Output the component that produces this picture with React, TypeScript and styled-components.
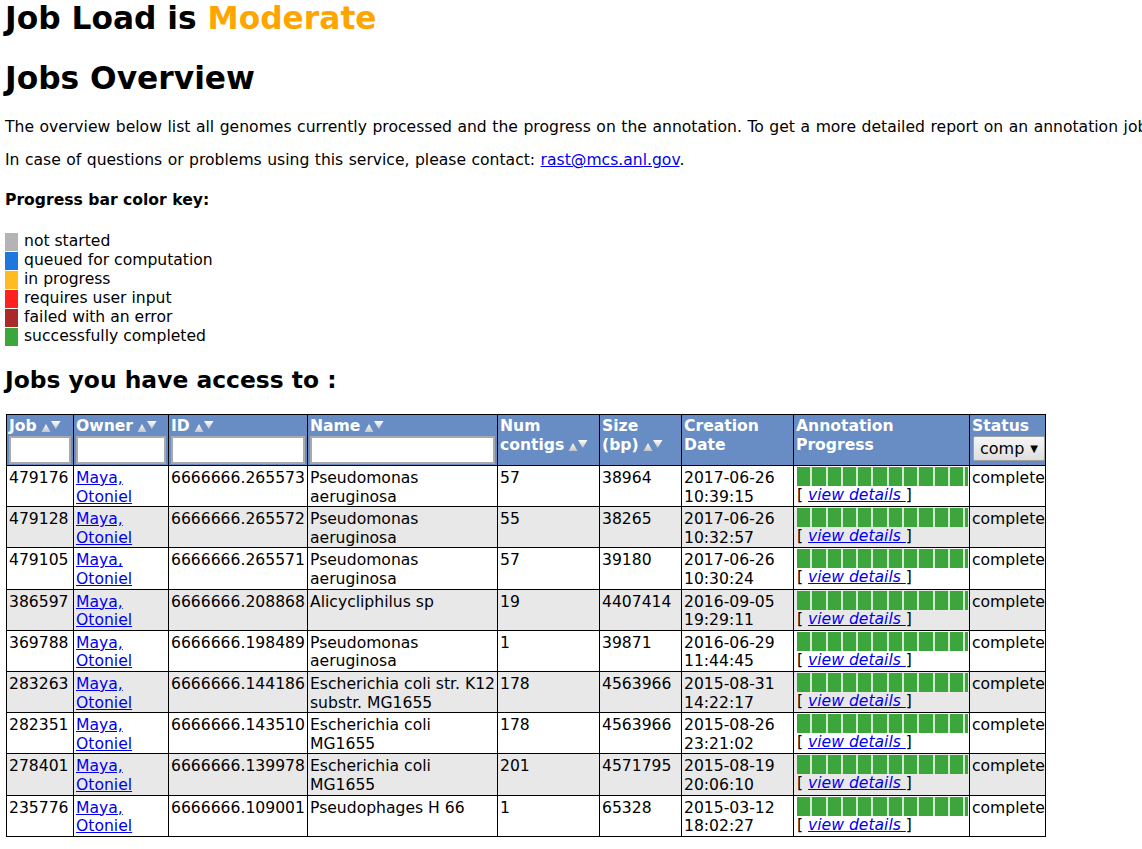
import React from "react";
import styled, { createGlobalStyle } from "styled-components";

const Global = createGlobalStyle`
  html, body { margin: 0; padding: 0; background: #fff; }
  body { font-family: "DejaVu Sans", Verdana, sans-serif; color: #000; font-size: 15.6px; }
`;

const Page = styled.div`
  padding: 0 5px 10px 5px;
  overflow: hidden;
`;

const Title = styled.h1<{ $mb?: number }>`
  font-size: 31.3px;
  font-weight: bold;
  margin: 0 0 ${(p) => p.$mb ?? 23}px 0;
  line-height: 37px;
`;

const Orange = styled.span`
  color: #ffa500;
`;

const Para = styled.p<{ $ws: number }>`
  margin: 0 0 15px 0;
  line-height: 18px;
  white-space: nowrap;
  word-spacing: ${(p) => p.$ws}px;
`;

const Link = styled.a`
  color: #0000ee;
  text-decoration: underline;
`;

const KeyTitle = styled.div`
  font-weight: bold;
  margin: 22px 0 24px 0;
  line-height: 18px;
`;

const Legend = styled.div`
  display: flex;
  flex-direction: column;
`;

const LegendRow = styled.div`
  display: flex;
  align-items: flex-start;
  height: 19px;
  line-height: 17px;
`;

const Swatch = styled.span<{ $c: string }>`
  width: 13px;
  height: 18px;
  background: ${(p) => p.$c};
  margin-right: 6px;
  flex: none;
`;

const SubTitle = styled.h2`
  font-size: 23.4px;
  font-weight: bold;
  margin: 19px 0 20px 0;
  line-height: 28px;
`;

const Table = styled.table`
  border-collapse: collapse;
  table-layout: fixed;
  width: 1039px;
  margin-left: 1px;
  font-size: 15.6px;
`;

const Th = styled.th`
  background: #678dc4;
  color: #fff;
  text-align: left;
  vertical-align: top;
  font-weight: bold;
  border: 1px solid #000;
  padding: 2px 2px 1px 2px;
  line-height: 19px;
`;

const Td = styled.td`
  border: 1px solid #000;
  vertical-align: top;
  padding: 3px 2px 0 2px;
  line-height: 18.6px;
`;

const Tr = styled.tr<{ $alt: boolean }>`
  background: ${(p) => (p.$alt ? "#e8e8e8" : "#fff")};
`;

const FilterInput = styled.input`
  display: block;
  box-sizing: border-box;
  width: 100%;
  height: 28px;
  margin: 0;
  border: 2px solid #a9a9a9;
  background: #fff;
  padding: 0;
`;

const SortIcon = styled.svg`
  vertical-align: -2px;
  margin-left: 4px;
`;

const StatusSelect = styled.div`
  display: inline-flex;
  align-items: center;
  justify-content: space-between;
  box-sizing: border-box;
  width: 72px;
  height: 25px;
  margin: 0 0 2px 1px;
  padding: 0 6px 0 6px;
  border: 1px solid #a0a0a0;
  border-radius: 2px;
  background: linear-gradient(#f6f6f6, #dedede);
  color: #000;
  font-weight: normal;
  font-size: 16px;
`;

const Caret = styled.span`
  font-size: 10px;
`;

const Bar = styled.div`
  display: flex;
  width: 171px;
  height: 19px;
  overflow: hidden;
  margin: -2px 0 0 1px;
`;

const Segment = styled.span`
  flex: none;
  width: 13.3px;
  height: 19px;
  background: #3ca53c;
  border-right: 2px solid #d2ead0;
`;

const Details = styled.div`
  line-height: 19px;
  margin-left: 1px;
`;

const ItalicLink = styled.a`
  color: #0000ee;
  font-style: italic;
  text-decoration: underline;
`;

const Sort = () => (
  <SortIcon width="20" height="14" viewBox="0 0 20 14">
    <defs>
      <linearGradient id="sg" x1="0" y1="0" x2="0" y2="1">
        <stop offset="0" stopColor="#ffffff" />
        <stop offset="1" stopColor="#c4c4c4" />
      </linearGradient>
    </defs>
    <polygon points="0.5,13 5,5 9.5,13" fill="url(#sg)" />
    <polygon points="10,2 19.5,2 14.75,10" fill="url(#sg)" />
  </SortIcon>
);

const legend = [
  ["#b4b4b4", "not started"],
  ["#1e78dc", "queued for computation"],
  ["#ffbb22", "in progress"],
  ["#ff2020", "requires user input"],
  ["#aa2a2a", "failed with an error"],
  ["#3ca53c", "successfully completed"],
];

const rows = [
  ["479176", "6666666.265573", "Pseudomonas aeruginosa", "57", "38964", "2017-06-26 10:39:15"],
  ["479128", "6666666.265572", "Pseudomonas aeruginosa", "55", "38265", "2017-06-26 10:32:57"],
  ["479105", "6666666.265571", "Pseudomonas aeruginosa", "57", "39180", "2017-06-26 10:30:24"],
  ["386597", "6666666.208868", "Alicycliphilus sp", "19", "4407414", "2016-09-05 19:29:11"],
  ["369788", "6666666.198489", "Pseudomonas aeruginosa", "1", "39871", "2016-06-29 11:44:45"],
  ["283263", "6666666.144186", "Escherichia coli str. K12 substr. MG1655", "178", "4563966", "2015-08-31 14:22:17"],
  ["282351", "6666666.143510", "Escherichia coli MG1655", "178", "4563966", "2015-08-26 23:21:02"],
  ["278401", "6666666.139978", "Escherichia coli MG1655", "201", "4571795", "2015-08-19 20:06:10"],
  ["235776", "6666666.109001", "Pseudophages H 66", "1", "65328", "2015-03-12 18:02:27"],
];

const widths = [67, 95, 139, 190, 102, 82, 112, 176, 76];

export default function App() {
  return (
    <>
      <Global />
      <Page>
        <Title>
          Job Load is <Orange>Moderate</Orange>
        </Title>
        <Title $mb={21}>Jobs Overview</Title>
        <Para $ws={0.6}>
          The overview below list all genomes currently processed and the progress on the annotation. To get a more detailed report on an annotation job, please click on the progress bar.
        </Para>
        <Para $ws={0.5}>
          In case of questions or problems using this service, please contact: <Link href="#">rast@mcs.anl.gov</Link>.
        </Para>
        <KeyTitle>Progress bar color key:</KeyTitle>
        <Legend>
          {legend.map(([c, t]) => (
            <LegendRow key={t}>
              <Swatch $c={c} />
              {t}
            </LegendRow>
          ))}
        </Legend>
        <SubTitle>Jobs you have access to :</SubTitle>
        <Table>
          <colgroup>
            {widths.map((w, i) => (
              <col key={i} style={{ width: w }} />
            ))}
          </colgroup>
          <thead>
            <tr>
              <Th>
                Job<Sort />
                <FilterInput />
              </Th>
              <Th>
                Owner<Sort />
                <FilterInput />
              </Th>
              <Th>
                ID<Sort />
                <FilterInput />
              </Th>
              <Th>
                Name<Sort />
                <FilterInput />
              </Th>
              <Th>
                Num contigs<Sort />
              </Th>
              <Th>
                Size (bp)<Sort />
              </Th>
              <Th>Creation Date</Th>
              <Th>Annotation Progress</Th>
              <Th>
                Status
                <StatusSelect>
                  comp<Caret>▼</Caret>
                </StatusSelect>
              </Th>
            </tr>
          </thead>
          <tbody>
            {rows.map((r, i) => (
              <Tr key={r[0]} $alt={i % 2 === 1}>
                <Td>{r[0]}</Td>
                <Td>
                  <Link href="#">Maya, Otoniel</Link>
                </Td>
                <Td>{r[1]}</Td>
                <Td>{r[2]}</Td>
                <Td>{r[3]}</Td>
                <Td>{r[4]}</Td>
                <Td>{r[5]}</Td>
                <Td>
                  <Bar>
                    {Array.from({ length: 12 }).map((_, k) => (
                      <Segment key={k} />
                    ))}
                  </Bar>
                  <Details>
                    [ <ItalicLink href="#">view details </ItalicLink>]
                  </Details>
                </Td>
                <Td>complete</Td>
              </Tr>
            ))}
          </tbody>
        </Table>
      </Page>
    </>
  );
}
